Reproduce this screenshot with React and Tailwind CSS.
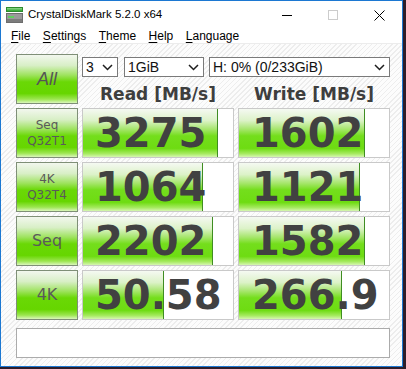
import React from 'react';

const rows = [
  { l1: 'Seq', l2: 'Q32T1', read: '3275', rv: 3275, write: '1602', wv: 1602 },
  { l1: '4K', l2: 'Q32T4', read: '1064', rv: 1064, write: '1121', wv: 1121 },
  { l1: 'Seq', read: '2202', rv: 2202, write: '1582', wv: 1582 },
  { l1: '4K', read: '50.58', rv: 50.58, write: '266.9', wv: 266.9 },
];

// bar length follows a log scale, like the original meter
const barWidth = (v) => Math.round(135 - 29.8 * (3.515 - Math.log10(v)));

const Chevron = () => (
  <svg width="11" height="7" viewBox="0 0 11 7" className="shrink-0">
    <path d="M1 1 L5.5 5.5 L10 1" fill="none" stroke="#1e1e1e" strokeWidth="1.5" />
  </svg>
);

const Select = ({ value, className }) => (
  <div className={`h-[20px] border border-[#7a7a7a] bg-white flex items-center justify-between pl-[3px] pr-[4px] text-[14px] text-[#111] ${className}`}>
    <span className="leading-none">{value}</span>
    <Chevron />
  </div>
);

const GREEN_BTN =
  'bg-[linear-gradient(to_bottom,#f2f7ee_0%,#d8efc6_22%,#9ee35e_42%,#6ad806_56%,#66d600_80%,#9ce650_92%,#dbf6bc_100%)] border border-[#7f8f77]';

const Meter = ({ text, value, pad }) => (
  <div className="h-[50px] border border-[#c9c9c9] bg-white grid overflow-hidden">
    <div
      className="col-start-1 row-start-1 h-full border-r border-[#3f8d22] bg-[linear-gradient(to_bottom,#f5f9f2_0%,#dcf2c8_24%,#a6e66c_42%,#74de1c_56%,#6edc12_82%,#a6ea60_93%,#d6f6b2_100%)]"
      style={{ width: barWidth(value) }}
    />
    <div
      className={`col-start-1 row-start-1 flex items-center ${pad} text-[40px] leading-[40px] font-bold text-[#414141] font-['DejaVu_Sans',sans-serif]`}
    >
      {text}
    </div>
  </div>
);

const DiskIcon = () => (
  <svg width="17" height="16" viewBox="0 0 17 16">
    <rect x="0.5" y="0.5" width="16" height="4" fill="#3fae3f" stroke="#2d8a2d" />
    <rect x="1" y="1" width="15" height="1.5" fill="#7fd07f" />
    <rect x="0.5" y="6.5" width="16" height="9" fill="#9a9a9a" stroke="#6e6e6e" />
    <rect x="2" y="9" width="6" height="2" fill="#5fcf5f" />
    <rect x="1" y="12" width="15" height="3" fill="#7c7c7c" />
  </svg>
);

export default function App() {
  return (
    <div className="w-[406px] h-[369px] bg-[#2e1d29] overflow-hidden font-['Liberation_Sans',Arial,sans-serif]">
      <div className="w-[403px] h-[367px] border border-[#1c78d2] bg-white flex flex-col">
        {/* title bar */}
        <div className="h-[28px] flex items-center shrink-0">
          <div className="ml-[5px]">
            <DiskIcon />
          </div>
          <span className="ml-[5px] text-[11.5px] text-black">CrystalDiskMark 5.2.0 x64</span>
          <div className="ml-auto flex h-full">
            <div className="w-[46px] flex items-center justify-center pt-[1px]">
              <svg width="10" height="10" viewBox="0 0 10 10">
                <rect x="0" y="4" width="10" height="1" fill="#000000" />
              </svg>
            </div>
            <div className="w-[46px] flex items-center justify-center">
              <div className="w-[10px] h-[10px] border border-[#cccccc]" />
            </div>
            <div className="w-[46px] flex items-center justify-center">
              <svg width="11" height="11" viewBox="0 0 11 11">
                <path d="M0.5 0.5 L10.5 10.5 M10.5 0.5 L0.5 10.5" stroke="#000" strokeWidth="1" />
              </svg>
            </div>
          </div>
        </div>

        {/* menu */}
        <div className="h-[14px] flex items-center pl-[10px] gap-[12.5px] text-[12px] text-black shrink-0">
          {['File', 'Settings', 'Theme', 'Help', 'Language'].map((m) => (
            <span key={m} className="leading-none">
              <span className="underline underline-offset-[2px]">{m[0]}</span>
              {m.slice(1)}
            </span>
          ))}
        </div>

        {/* client area */}
        <div className="flex-1 border-t border-[#ececec] bg-[image:repeating-linear-gradient(135deg,#fcfcfc_0px,#fcfcfc_2.6px,#ededed_2.6px,#ededed_3.6px)] pt-[10px] pl-[15px]">
          <div className="grid grid-cols-[62px_152px_152px] gap-[4px]">
            <div className={`h-[50px] flex items-center justify-center ${GREEN_BTN}`}>
              <span className="italic text-[18px] text-[#555555]">All</span>
            </div>
            <div className="col-span-2 flex flex-col">
              <div className="flex mt-[3px]">
                <Select value="3" className="w-[36px]" />
                <Select value="1GiB" className="w-[80px] ml-[6px]" />
                <Select value="H: 0% (0/233GiB)" className="w-[181px] ml-[5px]" />
              </div>
              <div className="grid grid-cols-[152px_152px] gap-[4px] mt-[7px] font-['DejaVu_Sans',sans-serif] font-bold text-[17px] leading-[20px] text-[#3e3e3e]">
                <div className="text-center">Read [MB/s]</div>
                <div className="text-center">Write [MB/s]</div>
              </div>
            </div>

            {rows.map((r, i) => (
              <React.Fragment key={i}>
                <div
                  className={`h-[50px] flex flex-col items-center justify-center text-[#5a5a5a] font-['DejaVu_Sans',sans-serif] ${GREEN_BTN}`}
                >
                  {r.l2 ? (
                    <>
                      <span className="text-[12px] leading-[16px]">{r.l1}</span>
                      <span className="text-[12px] leading-[16px]">{r.l2}</span>
                    </>
                  ) : (
                    <span className="text-[16px] leading-[20px]">{r.l1}</span>
                  )}
                </div>
                <Meter text={r.read} value={r.rv} pad="pl-[12px]" />
                <Meter text={r.write} value={r.wv} pad="pl-[13px]" />
              </React.Fragment>
            ))}
          </div>
          <div className="mt-[8px] w-[374px] h-[30px] border border-[#ababab] bg-white" />
        </div>
      </div>
    </div>
  );
}
